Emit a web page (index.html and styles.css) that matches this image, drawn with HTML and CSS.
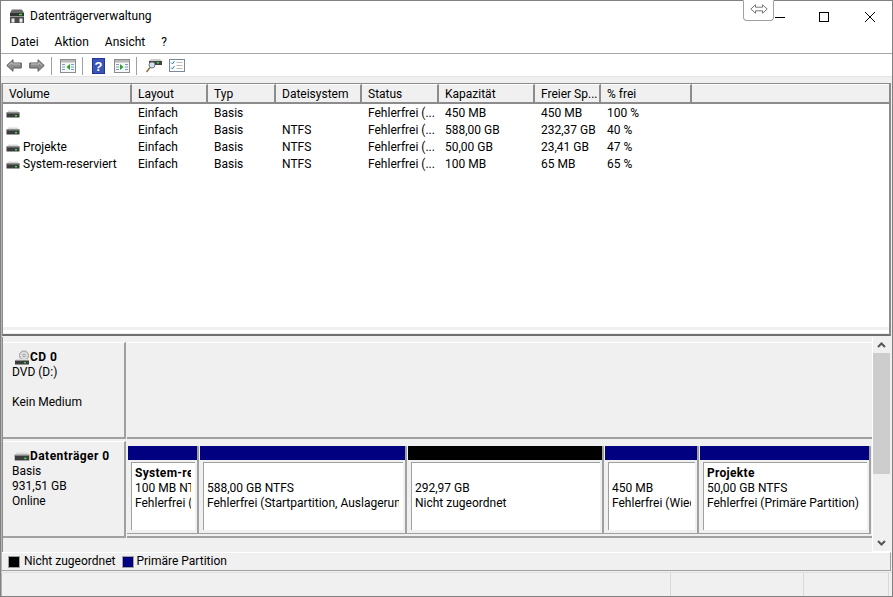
FILE: index.html
```html
<!DOCTYPE html>
<html lang="de">
<head>
<meta charset="utf-8">
<title>Datenträgerverwaltung</title>
<link rel="stylesheet" href="styles.css">
</head>
<body>
<svg width="0" height="0" class="defs">
  <defs>
    <symbol id="disk" viewBox="0 0 14 8">
      <path d="M1 2.500 2.500 .5h9L13 2.500z" fill="#d8d8d8"/>
      <rect x=".5" y="2.500" width="13" height="5" fill="#3c3c3c"/>
      <rect x=".5" y="2.500" width="13" height="1" fill="#8a8a8a"/>
      <rect x="9" y="5" width="2" height="1.400" fill="#3fe04a"/>
    </symbol>
  </defs>
</svg>
<div class="window">
  <header class="titlebar">
    <svg class="appicon" width="16" height="15" viewBox="0 0 16 15">
      <path d="M3 .5h10l2 3.500H1z" fill="#6a6a6a"/>
      <rect x="1" y="4" width="14" height="3.500" fill="#333"/>
      <rect x="10" y="4.800" width="3" height="1.400" fill="#3fe04a"/>
      <rect x="1" y="8" width="14" height="6" fill="#4a4a4a"/>
      <rect x="2.500" y="9.500" width="3" height="4" fill="#eee"/>
      <rect x="10.500" y="9.500" width="3" height="4" fill="#eee"/>
    </svg>
    <span class="title">Datenträgerverwaltung</span>
    <div class="winctl">
      <svg width="10" height="10" viewBox="0 0 10 10"><path d="M0 5.500h10" stroke="#000"/></svg>
      <svg width="10" height="10" viewBox="0 0 10 10"><rect x=".5" y=".5" width="9" height="9" fill="none" stroke="#000"/></svg>
      <svg width="10" height="10" viewBox="0 0 10 10"><path d="M0 0l10 10M10 0 0 10" stroke="#000"/></svg>
    </div>
  </header>
  <nav class="menubar">
    <span>Datei</span><span>Aktion</span><span>Ansicht</span><span>?</span>
  </nav>
  <div class="toolbar">
    <svg width="16" height="13" viewBox="0 0 16 13"><path d="M.8 6.500 7 .7v3.300h8.300v5H7v3.300z" fill="#8c8c8c" stroke="#5a5a5a"/><path d="M2.500 6.500 6 3.500v1.500h8" fill="none" stroke="#c4c4c4"/></svg>
    <svg class="m7" width="16" height="13" viewBox="0 0 16 13"><path d="M15.200 6.500 9 .7v3.300H.7v5H9v3.300z" fill="#8c8c8c" stroke="#5a5a5a"/><path d="M2 5h8V3.500l3 3" fill="none" stroke="#c4c4c4"/></svg>
    <i class="sep m6"></i>
    <svg class="m8" width="16" height="14" viewBox="0 0 16 14"><rect x=".5" y=".5" width="15" height="13" fill="#f4f7fa" stroke="#8c8c8c"/><rect x="1" y="1" width="14" height="2.500" fill="#b8b8b8"/><path d="M2 5.500h3M2 8h3M2 10.500h3M11 5.500h3M11 8h3M11 10.500h3" stroke="#7f9db9"/><path d="M10 5v6L6.500 8z" fill="#2aa12a"/></svg>
    <i class="sep m6"></i>
    <svg class="m9 tb-help" width="13" height="16" viewBox="0 0 13 16"><rect width="13" height="16" fill="#3a55b5"/><rect x=".5" y=".5" width="12" height="15" fill="none" stroke="#22359a"/><text x="6.500" y="13" text-anchor="middle" class="helpq">?</text></svg>
    <svg class="m9" width="16" height="14" viewBox="0 0 16 14"><rect x=".5" y=".5" width="15" height="13" fill="#f4f7fa" stroke="#8c8c8c"/><rect x="1" y="1" width="14" height="2.500" fill="#b8b8b8"/><path d="M2 5.500h3M2 8h3M2 10.500h3M11 5.500h3M11 8h3M11 10.500h3" stroke="#7f9db9"/><path d="M6 5v6l3.500-3z" fill="#2aa12a"/></svg>
    <i class="sep m6"></i>
    <svg class="m9" width="16" height="15" viewBox="0 0 16 15"><path d="M3 3l2-2h9l2 2z" fill="#ccc"/><rect x="3" y="3" width="13" height="4" fill="#444"/><rect x="11" y="4" width="2" height="1.500" fill="#3fe04a"/><circle cx="6" cy="7" r="3" fill="#cfe3f2" stroke="#777"/><path d="M4 9.500 .5 14" stroke="#8a6d3b" stroke-width="1.500"/></svg>
    <svg class="m7" width="16" height="13" viewBox="0 0 16 13"><rect x=".5" y=".5" width="15" height="12" fill="#fff" stroke="#7a8a99"/><path d="M2 3.500l1.500 1.500 2-3M2 8.500l1.500 1.500 2-3" fill="none" stroke="#2f7fd6"/><path d="M7.500 3.500h6M7.500 6.500h6M7.500 9.500h6" stroke="#bbb"/></svg>
  </div>
  <div class="strip"></div>

  <section class="listpane">
    <div class="row head">
      <span>Volume</span><span>Layout</span><span>Typ</span><span>Dateisystem</span><span>Status</span><span>Kapazität</span><span>Freier Sp...</span><span>% frei</span><span></span>
    </div>
    <div class="row">
      <span class="vol"><svg width="14" height="8"><use href="#disk"/></svg></span><span>Einfach</span><span>Basis</span><span></span><span>Fehlerfrei (...</span><span>450 MB</span><span>450 MB</span><span>100 %</span>
    </div>
    <div class="row">
      <span class="vol"><svg width="14" height="8"><use href="#disk"/></svg></span><span>Einfach</span><span>Basis</span><span>NTFS</span><span>Fehlerfrei (...</span><span>588,00 GB</span><span>232,37 GB</span><span>40 %</span>
    </div>
    <div class="row">
      <span class="vol"><svg width="14" height="8"><use href="#disk"/></svg>Projekte</span><span>Einfach</span><span>Basis</span><span>NTFS</span><span>Fehlerfrei (...</span><span>50,00 GB</span><span>23,41 GB</span><span>47 %</span>
    </div>
    <div class="row">
      <span class="vol"><svg width="14" height="8"><use href="#disk"/></svg>System-reserviert</span><span>Einfach</span><span>Basis</span><span>NTFS</span><span>Fehlerfrei (...</span><span>100 MB</span><span>65 MB</span><span>65 %</span>
    </div>
    <div class="listfill"></div>
    <div class="listfoot"></div>
  </section>

  <section class="diskpane">
    <div class="disks">
      <div class="diskrow cd">
        <div class="disklabel">
          <div class="diskname">
            <svg width="16" height="16" viewBox="0 0 16 16"><circle cx="10" cy="5.500" r="4.500" fill="#ddd" stroke="#999"/><circle cx="10" cy="5.500" r="1.200" fill="#fff" stroke="#999"/><path d="M1 10.500 2 9h12l1 1.500z" fill="#ddd"/><rect x="1" y="10.500" width="14" height="4" fill="#3c3c3c"/><rect x="10" y="12" width="2" height="1.200" fill="#3fe04a"/></svg>
            <b>CD 0</b>
          </div>
          <div class="dl">DVD (D:)</div>
          <div class="dl"></div>
          <div class="dl">Kein Medium</div>
        </div>
        <div class="cdbody"></div>
      </div>
      <div class="diskrow hd">
        <div class="disklabel">
          <div class="diskname">
            <svg width="16" height="9" viewBox="0 0 14 8"><use href="#disk"/></svg>
            <b>Datenträger 0</b>
          </div>
          <div class="dl">Basis</div>
          <div class="dl">931,51 GB</div>
          <div class="dl">Online</div>
        </div>
        <div class="partitions">
          <div class="part p1"><div class="bar"></div><div class="pbody"><div class="pinner"><b>System-reserviert</b><span>100 MB NTFS</span><span>Fehlerfrei (System, Aktiv, Primäre Partition)</span></div></div></div>
          <div class="part p2"><div class="bar"></div><div class="pbody"><div class="pinner"><b>&nbsp;</b><span>588,00 GB NTFS</span><span>Fehlerfrei (Startpartition, Auslagerungsdatei, Absturzabbild)</span></div></div></div>
          <div class="part p3"><div class="bar black"></div><div class="pbody"><div class="pinner"><b>&nbsp;</b><span>292,97 GB</span><span>Nicht zugeordnet</span></div></div></div>
          <div class="part p4"><div class="bar"></div><div class="pbody"><div class="pinner"><b>&nbsp;</b><span>450 MB</span><span>Fehlerfrei (Wiederherstellungspartition)</span></div></div></div>
          <div class="part p5"><div class="bar"></div><div class="pbody"><div class="pinner"><b>Projekte</b><span>50,00 GB NTFS</span><span>Fehlerfrei (Primäre Partition)</span></div></div></div>
        </div>
      </div>
    </div>
    <div class="scrollbar">
      <svg width="17" height="16" viewBox="0 0 17 16"><path d="M5 10l3.500-3.500L12 10" fill="none" stroke="#555" stroke-width="2"/></svg>
      <div class="track"><div class="thumb"></div></div>
      <svg width="17" height="16" viewBox="0 0 17 16"><path d="M5 6l3.500 3.500L12 6" fill="none" stroke="#555" stroke-width="2"/></svg>
    </div>
  </section>

  <div class="legend">
    <i class="swatch black"></i><span>Nicht zugeordnet</span>
    <i class="swatch navy"></i><span class="second">Primäre Partition</span>
  </div>

  <footer class="statusbar"><span></span><span></span><span></span><span></span></footer>

  <div class="resizetip">
    <svg width="18" height="10" viewBox="0 0 18 10"><path d="M.8 5 5.500.8v2.400h7V.8L17.200 5l-4.700 4.200V6.800h-7v2.400z" fill="#fff" stroke="#777"/></svg>
  </div>
</div>
</body>
</html>
```

FILE: styles.css
```css
* { box-sizing: border-box; }
html, body { margin: 0; padding: 0; }
body {
  width: 893px;
  height: 597px;
  overflow: hidden;
  background: #fff;
  font: 12px/17px Roboto, "Noto Sans", sans-serif;
  color: #000;
}
.defs { position: absolute; }
.window {
  position: relative;
  width: 893px;
  height: 597px;
  border: 1px solid #808080;
  box-shadow: inset 1px 0 0 #b4b4b4;
  display: flex;
  flex-direction: column;
  background: #f0f0f0;
}
.titlebar {
  height: 31px;
  flex: none;
  background: #fff;
  display: flex;
  align-items: center;
  padding-left: 8px;
}
.appicon { flex: none; }
.title { margin-left: 5px; }
.winctl {
  margin-left: auto;
  display: flex;
  gap: 34px;
  padding-right: 17px;
  align-items: center;
}
.winctl svg:last-child { margin-left: 2px; }
.menubar {
  height: 22px;
  flex: none;
  background: #fff;
  border-bottom: 1px solid #a9a9a9;
  display: flex;
  align-items: center;
  padding-left: 10px;
  gap: 16px;
}
.toolbar {
  height: 22px;
  flex: none;
  background: #fff;
  display: flex;
  align-items: center;
  padding: 1px 0 0 5px;
}
.m6 { margin-left: 6px; }
.m7 { margin-left: 7px; }
.m8 { margin-left: 8px; }
.m9 { margin-left: 9px; }
.sep { width: 1px; height: 18px; background: #a0a0a0; }
.strip {
  height: 7px;
  flex: none;
  background: #f0f0f0;
  border-top: 1px solid #e3e3e3;
}
.listpane {
  height: 253px;
  flex: none;
  margin: 0 1px;
  background: #fff;
  border: 1px solid #8c8c8c;
  border-bottom: 2px solid #707070;
  border-right: 2px solid #8c8c8c;
  display: flex;
  flex-direction: column;
}
.row {
  display: grid;
  grid-template-columns: 129px 76px 68px 86px 77px 96px 66px 91px 1fr;
  height: 17px;
  flex: none;
}
.row > span { padding-left: 6px; white-space: nowrap; overflow: hidden; }
.row > span.vol { padding-left: 3px; display: flex; align-items: center; gap: 3px; }
.vol svg { flex: none; }
.head {
  height: 20px;
  margin-bottom: 1px;
  background: #f0f0f0;
}
.head > span {
  border-right: 2px solid #8c8c8c;
  border-bottom: 2px solid #8c8c8c;
  border-top: 1px solid #fff;
  padding-top: 1px;
  line-height: 16px;
}
.head > span:last-child { border-right: 0; }
.listfill { flex: 1; }
.listfoot {
  height: 7px;
  flex: none;
  background: #fff;
  border-top: 3px solid #f0f0f0;
  border-bottom: 1px solid #f0f0f0;
}
.diskpane {
  flex: none;
  height: 215px;
  margin-top: 1px;
  display: flex;
  margin-left: 1px;
  margin-right: 1px;
  background: #f0f0f0;
  border-left: 1px solid #8c8c8c;
}
.disks {
  flex: 1;
  display: flex;
  flex-direction: column;
  padding-top: 5px;
  gap: 2px;
  border-right: 1px solid #fff;
}
.diskrow { display: flex; height: 97px; flex: none; }
.disklabel {
  width: 123px;
  flex: none;
  padding: 7px 0 0 9px;
  border-top: 1px solid #fff;
  border-right: 2px solid #a0a0a0;
  border-bottom: 2px solid #a0a0a0;
  line-height: 15px;
}
.diskname { display: flex; align-items: center; height: 15px; margin-left: 2px; }
.diskname svg { flex: none; }
.diskname b { font-weight: 700; white-space: nowrap; letter-spacing: .45px; }
.dl { height: 15px; }
.cdbody {
  flex: 1;
  margin-left: 1px;
  border-top: 1px solid #fff;
  border-bottom: 2px solid #a0a0a0;
}
.partitions {
  flex: 1;
  display: flex;
  margin-left: 1px;
  padding: 5px 0 2px;
  border-bottom: 2px solid #a0a0a0;
}
.part {
  display: flex;
  flex-direction: column;
  border-right: 2px solid #a0a0a0;
  border-bottom: 1px solid #a0a0a0;
  flex: none;
}
.part.p1 { width: 72px; }
.part.p2 { width: 208px; }
.part.p3 { width: 197px; }
.part.p4 { width: 95px; }
.part.p5 { width: 172px; }
.bar { height: 14px; background: #000080; margin-left: 1px; flex: none; }
.bar.black { background: #000; }
.pbody { flex: 1; padding: 2px 2px 3px 4px; min-height: 0; }
.pinner {
  height: 100%;
  background: #fff;
  border-top: 1px solid #a0a0a0;
  border-left: 1px solid #a0a0a0;
  padding: 3px 4px 0 3px;
  display: flex;
  flex-direction: column;
  line-height: 15px;
  overflow: hidden;
}
.pinner b, .pinner span { display: block; white-space: nowrap; overflow: hidden; }
.pinner b { font-weight: 700; letter-spacing: .3px; }
.scrollbar {
  width: 18px;
  flex: none;
  display: flex;
  flex-direction: column;
  background: #f0f0f0;
  padding-right: 1px;
  border-bottom: 1px solid #fff;
}
.scrollbar svg { flex: none; }
.track { flex: 1; }
.thumb { height: 121px; background: #cdcdcd; }
.legend {
  height: 19px;
  flex: none;
  margin: 0 1px;
  display: flex;
  align-items: center;
  padding-left: 6px;
  background: #f0f0f0;
  border-top: 1px solid #fff;
  border-right: 1px solid #a0a0a0;
  border-bottom: 1px solid #a0a0a0;
}
.legend span { margin-left: 4px; margin-right: 7px; }
.legend span.second { margin-left: 2px; }
.swatch { width: 12px; height: 12px; border: 1px solid #a0a0a0; }
.swatch.black { background: #000; }
.swatch.navy { background: #000080; }
.statusbar {
  flex: 1;
  display: grid;
  grid-template-columns: 670px 133px 85px 1fr;
  border-top: 1px solid #e0e0e0;
  margin-top: 1px;
}
.statusbar span { border-right: 1px solid #d9d9d9; }
.statusbar span:last-child { border-right: 0; }
.resizetip {
  position: absolute;
  left: 742px;
  top: -1px;
  width: 31px;
  height: 21px;
  background: #fff;
  border: 1px solid #a0a0a0;
  border-top-color: #fff;
  border-radius: 0 0 4px 4px;
  display: flex;
  align-items: center;
  justify-content: center;
  padding-bottom: 3px;
}
.helpq { font: bold 13px "Liberation Sans", sans-serif; fill: #fff; }
```
